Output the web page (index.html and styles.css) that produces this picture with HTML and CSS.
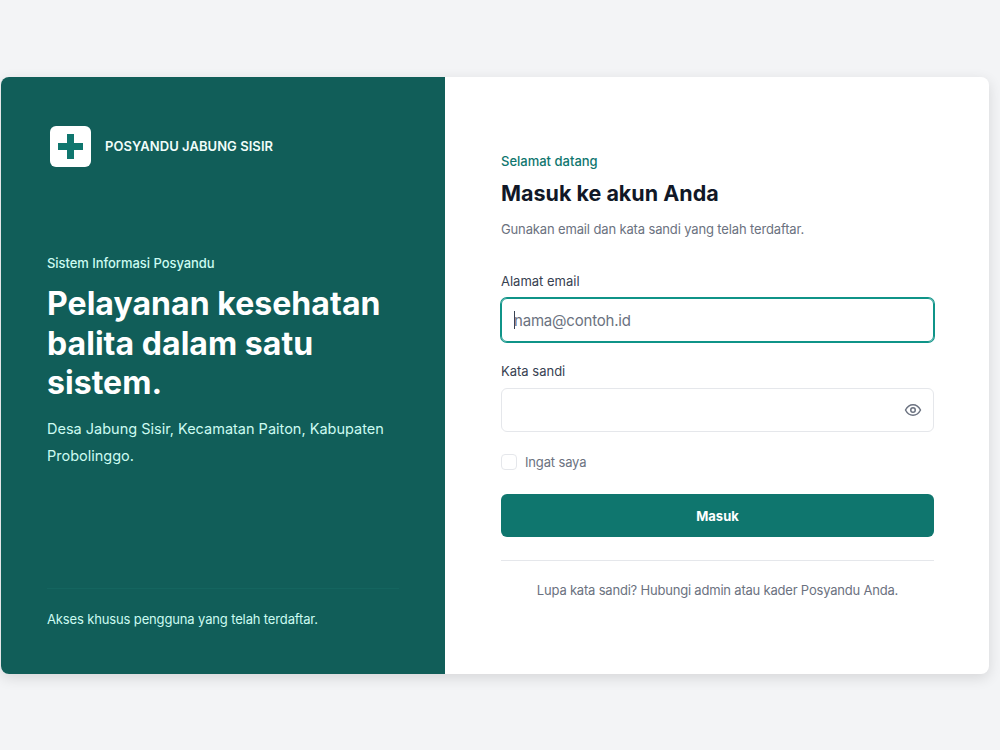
FILE: index.html
```html
<!DOCTYPE html>
<html lang="id">
<head>
  <meta charset="UTF-8">
  <meta name="viewport" content="width=device-width, initial-scale=1.0">
  <title>Masuk - Posyandu Jabung Sisir</title>
  <link rel="stylesheet" href="styles.css">
</head>
<body>

<div class="kartu">
  <section class="panel-kiri">
    <div class="brand">
      <div class="brand-logo">
        <svg class="ikon-plus" width="25" height="25" viewBox="0 0 25 25"><path d="M9 0h7v9h9v7h-9v9H9v-9H0V9h9z" fill="#0f766e"/></svg>
      </div>
      <span class="brand-nama">POSYANDU JABUNG SISIR</span>
    </div>

    <div class="hero">
      <p class="hero-kecil">Sistem Informasi Posyandu</p>
      <h1>Pelayanan kesehatan balita dalam satu sistem.</h1>
      <p class="hero-desa">Desa Jabung Sisir, Kecamatan Paiton, Kabupaten Probolinggo.</p>
    </div>

    <div class="kaki-kiri">Akses khusus pengguna yang telah terdaftar.</div>
  </section>

  <section class="panel-kanan">
    <p class="sapaan">Selamat datang</p>
    <h2>Masuk ke akun Anda</h2>
    <p class="keterangan">Gunakan email dan kata sandi yang telah terdaftar.</p>

    <form class="form-masuk">
      <label class="label" for="email">Alamat email</label>
      <div class="isian isian-aktif">
        <span class="kursor"></span>
        <input id="email" type="email" placeholder="nama@contoh.id">
      </div>

      <label class="label" for="sandi">Kata sandi</label>
      <div class="isian">
        <input id="sandi" type="password">
        <svg class="ikon-mata" width="18" height="18" viewBox="0 0 24 24" fill="none" stroke="#6b7280" stroke-width="2" stroke-linecap="round" stroke-linejoin="round"><path d="M2 12s3.600-7 10-7 10 7 10 7-3.600 7-10 7-10-7-10-7z"/><circle cx="12" cy="12" r="3"/></svg>
      </div>

      <label class="ingat">
        <span class="kotak"></span>
        Ingat saya
      </label>

      <button type="button" class="tombol">Masuk</button>
    </form>

    <p class="bantuan">Lupa kata sandi? Hubungi admin atau kader Posyandu Anda.</p>
  </section>
</div>

</body>
</html>
```

FILE: styles.css
```css
* {
  box-sizing: border-box;
}

body {
  margin: 0;
  min-height: 100vh;
  background-color: #f3f4f6;
  font-family: "Inter", "Noto Sans", sans-serif;
  padding: 77px 11px 76px 1px;
}

p {
  margin: 0;
}

.kartu {
  display: flex;
  height: 597px;
  background-color: white;
  border-radius: 8px;
  overflow: hidden;
  box-shadow: 0 4px 14px rgba(0, 0, 0, 0.12);
}

.panel-kiri {
  width: 444px;
  flex-shrink: 0;
  display: flex;
  flex-direction: column;
  padding: 49px 46px 0 46px;
  background-color: #115e59;
  color: #ccfbf1;
}

.brand {
  display: flex;
  align-items: center;
  gap: 14px;
  padding-left: 3px;
}

.brand-logo {
  width: 41px;
  height: 41px;
  display: flex;
  align-items: center;
  justify-content: center;
  background-color: white;
  border-radius: 6px;
}

.ikon-plus {
  margin-bottom: 1px;
}

.brand-nama {
  padding-bottom: 2px;
  font-size: 13px;
  font-weight: 600;
  letter-spacing: 0.05px;
  color: #f0fdfa;
}

.hero {
  margin-top: 86px;
}

.hero-kecil {
  font-size: 13px;
  font-weight: 500;
  line-height: 20px;
  letter-spacing: -0.05px;
}

.hero h1 {
  margin: 11px 0 0;
  font-size: 32px;
  font-weight: 700;
  line-height: 39.5px;
  letter-spacing: 0.05px;
  color: white;
}

.hero-desa {
  margin-top: 12px;
  font-size: 14.5px;
  line-height: 27px;
}

.kaki-kiri {
  margin-top: auto;
  margin-bottom: 45px;
  border-top: 1px solid #14655f;
  padding-top: 20px;
  font-size: 13px;
  line-height: 20px;
  letter-spacing: -0.14px;
}

.panel-kanan {
  flex: 1;
  padding: 75px 55px 0 56px;
}

.sapaan {
  font-size: 13px;
  font-weight: 500;
  line-height: 18px;
  color: #0f766e;
}

.panel-kanan h2 {
  margin: 9px 0 0;
  font-size: 21.5px;
  font-weight: 700;
  line-height: 28px;
  color: #111827;
}

.keterangan {
  margin-top: 12px;
  font-size: 13px;
  line-height: 20px;
  letter-spacing: -0.14px;
  color: #6b7280;
}

.form-masuk {
  margin-top: 32px;
}

.label {
  display: block;
  margin-bottom: 7px;
  font-size: 13px;
  font-weight: 400;
  line-height: 20px;
  color: #374151;
}

.isian {
  display: flex;
  align-items: center;
  height: 44px;
  margin-bottom: 20px;
  padding: 0 12px;
  border: 1px solid #e5e7eb;
  border-radius: 6px;
}

.isian-aktif {
  margin-bottom: 19px;
  border-color: #0f9488;
  box-shadow: 0 0 0 1px #0f9488;
}

.kursor {
  width: 1px;
  height: 18px;
  margin-right: -1px;
  background-color: #374151;
}

.isian input {
  flex: 1;
  min-width: 0;
  border: none;
  outline: none;
  padding: 0;
  background: none;
  font-family: inherit;
  font-size: 15px;
  letter-spacing: -0.2px;
  color: #111827;
}

.isian input::placeholder {
  color: #6b7280;
}

.ikon-mata {
  margin-right: -1px;
}

.ingat {
  display: flex;
  align-items: center;
  gap: 8px;
  font-size: 13px;
  line-height: 20px;
  letter-spacing: -0.15px;
  color: #6b7280;
}

.kotak {
  width: 16px;
  height: 16px;
  border: 1px solid #e5e7eb;
  border-radius: 4px;
}

.tombol {
  display: block;
  width: 100%;
  height: 43px;
  margin-top: 22px;
  border: none;
  border-radius: 6px;
  background-color: #0f766e;
  color: white;
  font-family: inherit;
  font-size: 13px;
  font-weight: 700;
  cursor: pointer;
}

.bantuan {
  margin-top: 23px;
  padding-top: 19px;
  border-top: 1px solid #e5e7eb;
  text-align: center;
  font-size: 13px;
  line-height: 20px;
  letter-spacing: -0.2px;
  color: #6b7280;
}
```
